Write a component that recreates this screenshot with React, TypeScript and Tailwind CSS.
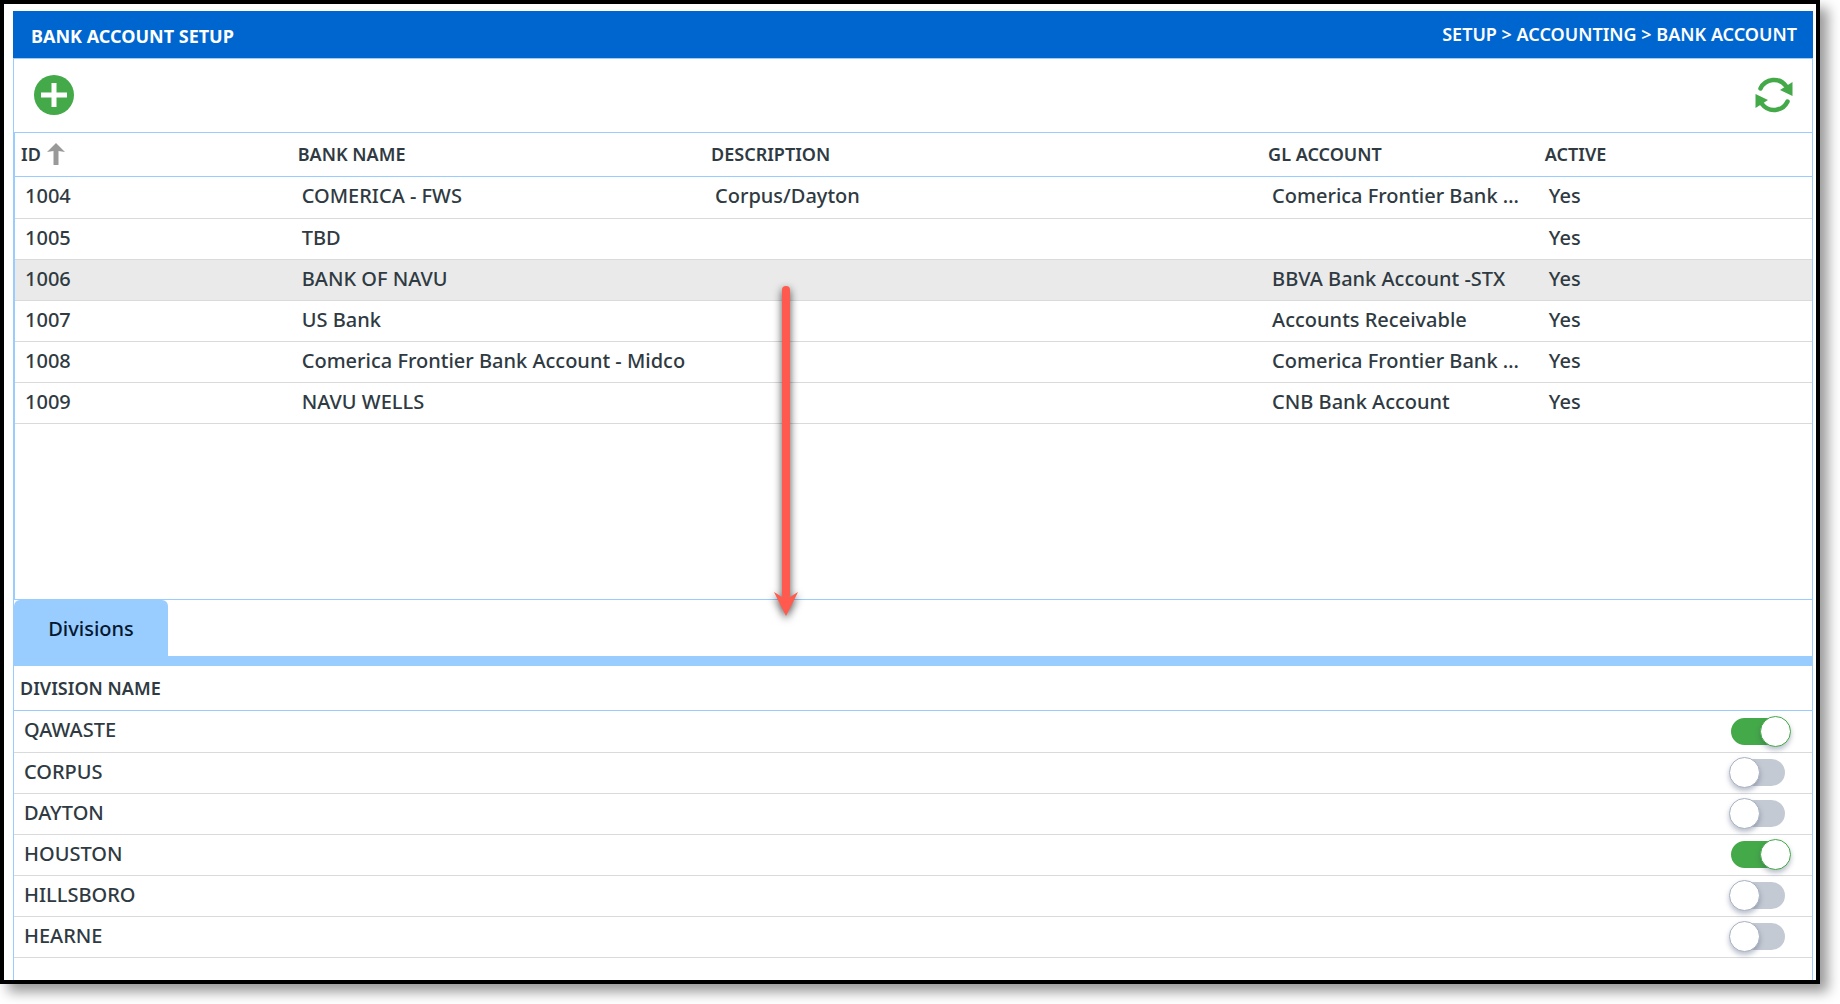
import { useState } from "react"

type Account = {
  id: string
  name: string
  description: string
  glAccount: string
  active: string
}

const accounts: Account[] = [
  { id: "1004", name: "COMERICA - FWS", description: "Corpus/Dayton", glAccount: "Comerica Frontier Bank …", active: "Yes" },
  { id: "1005", name: "TBD", description: "", glAccount: "", active: "Yes" },
  { id: "1006", name: "BANK OF NAVU", description: "", glAccount: "BBVA Bank Account -STX", active: "Yes" },
  { id: "1007", name: "US Bank", description: "", glAccount: "Accounts Receivable", active: "Yes" },
  { id: "1008", name: "Comerica Frontier Bank Account - Midco", description: "", glAccount: "Comerica Frontier Bank …", active: "Yes" },
  { id: "1009", name: "NAVU WELLS", description: "", glAccount: "CNB Bank Account", active: "Yes" },
]

const initialDivisions = [
  { name: "QAWASTE", enabled: true },
  { name: "CORPUS", enabled: false },
  { name: "DAYTON", enabled: false },
  { name: "HOUSTON", enabled: true },
  { name: "HILLSBORO", enabled: false },
  { name: "HEARNE", enabled: false },
]

function AddIcon() {
  return (
    <svg viewBox="0 0 40 40" className="size-10" aria-hidden="true">
      <circle cx="20" cy="20" r="20" fill="#44a948" />
      <path d="M20 8v24M7 20h26" stroke="#fff" strokeWidth="5" />
    </svg>
  )
}

function RefreshIcon() {
  return (
    <svg viewBox="0 0 38 36" className="h-9 w-[38px]" fill="none" aria-hidden="true">
      <path d="M5.500 11.500A15 15 0 0 1 31 9" stroke="#44a948" strokeWidth="4.500" strokeLinecap="round" />
      <path d="M32.500 24.500A15 15 0 0 1 7 27" stroke="#44a948" strokeWidth="4.500" strokeLinecap="round" />
      <path d="M37.500 5v14L25 13z" fill="#44a948" />
      <path d="M.5 31V17L13 23z" fill="#44a948" />
    </svg>
  )
}

function SortArrow() {
  return (
    <svg viewBox="0 0 18 22" className="h-[22px] w-[18px]" aria-hidden="true">
      <path d="M9 0l9 9-6.500-1v14h-5V8L0 9z" fill="#999" />
    </svg>
  )
}

function DragArrow() {
  return (
    <svg
      viewBox="0 0 40 350"
      className="pointer-events-none absolute top-[278px] left-[762px] h-[350px] w-10 drop-shadow-[0_3px_4px_rgba(0,0,0,0.7)]"
      aria-hidden="true"
    >
      <path d="M20 8v304" stroke="#ff5a4d" strokeWidth="8" strokeLinecap="round" />
      <path d="M8 310l8 5h8l8-5-12 24z" fill="#ff5a4d" />
    </svg>
  )
}

function AccountsTable() {
  return (
    <div className="min-h-[468px] border-y border-l border-[#99ccff]">
      <table className="w-full table-fixed border-collapse text-left">
        <thead className="text-lg leading-6">
          <tr className="h-[43px] border-b border-[#99ccff]">
            <th className="w-[15.4%] px-1.5 font-semibold">
              <span className="flex items-center gap-1.5">
                ID <SortArrow />
              </span>
            </th>
            <th className="w-[23%] px-1.5 font-semibold">BANK NAME</th>
            <th className="w-[31%] px-1.5 font-semibold">DESCRIPTION</th>
            <th className="w-[15.4%] px-1.5 font-semibold">GL ACCOUNT</th>
            <th className="px-1.5 font-semibold">ACTIVE</th>
          </tr>
        </thead>
        <tbody className="text-xl leading-6 font-medium">
          {accounts.map((account) => (
            <tr
              key={account.id}
              className={`h-[41px] border-b border-[#d8dadb] first:h-[42px] ${account.id === "1006" ? "bg-[#eaeaea]" : ""}`}
            >
              <td className="truncate px-2.5 pb-0.5">{account.id}</td>
              <td className="truncate px-2.5 pb-0.5">{account.name}</td>
              <td className="truncate px-2.5 pb-0.5">{account.description}</td>
              <td className="truncate px-2.5 pb-0.5">{account.glAccount}</td>
              <td className="truncate px-2.5 pb-0.5">{account.active}</td>
            </tr>
          ))}
        </tbody>
      </table>
    </div>
  )
}

function DivisionsTable() {
  const [divisions, setDivisions] = useState(initialDivisions)

  const toggle = (name: string) =>
    setDivisions((rows) => rows.map((row) => (row.name === name ? { ...row, enabled: !row.enabled } : row)))

  return (
    <table className="w-full border-collapse text-left">
      <thead className="text-lg leading-6">
        <tr className="h-11 border-b border-[#99ccff]">
          <th className="px-1.5 font-semibold" colSpan={2}>
            DIVISION NAME
          </th>
        </tr>
      </thead>
      <tbody className="text-xl leading-6 font-medium">
        {divisions.map((division) => (
          <tr key={division.name} className="h-[41px] border-b border-[#d8dadb] first:h-[42px]">
            <td className="px-2.5 pb-0.5">
              <label htmlFor={division.name}>{division.name}</label>
            </td>
            <td className="pr-[27px]">
              <input
                id={division.name}
                type="checkbox"
                role="switch"
                checked={division.enabled}
                onChange={() => toggle(division.name)}
                className="relative ml-auto block h-[27px] w-[54px] cursor-pointer appearance-none rounded-full bg-[#c4cad3] before:absolute before:-top-0.5 before:-left-0.5 before:size-[31px] before:rounded-full before:border before:border-[#a9b2c3] before:bg-white before:shadow-[0_3px_5px_rgba(60,75,110,0.35)] checked:bg-[#44a948] checked:before:left-[29px] checked:before:border-[#44a948]"
              />
            </td>
          </tr>
        ))}
      </tbody>
    </table>
  )
}

export default function App() {
  return (
    <div className="flex min-h-screen flex-col bg-white pr-5 pb-5 font-['Noto_Sans','Open_Sans',sans-serif] text-[#2f3a42]">
      <main className="relative flex flex-1 flex-col border-4 border-black bg-white pt-[7px] pr-[3px] pl-[9px] shadow-[8px_8px_12px_rgba(0,0,0,0.4)]">
        <header className="flex h-[47px] items-center justify-between bg-[#0066cf] pr-4 pl-[18px] text-lg leading-6 text-white">
          <h1 className="pt-0.5 font-bold">BANK ACCOUNT SETUP</h1>
          <nav className="pb-0.5 font-semibold">SETUP &gt; ACCOUNTING &gt; BANK ACCOUNT</nav>
        </header>
        <section className="flex-1 border-x border-t border-[#99ccff]">
          <div className="flex h-[73px] items-center justify-between pr-[19px] pb-0.5 pl-5">
            <button type="button" aria-label="Add bank account" className="cursor-pointer">
              <AddIcon />
            </button>
            <button type="button" aria-label="Refresh" className="cursor-pointer">
              <RefreshIcon />
            </button>
          </div>
          <AccountsTable />
          <div role="tablist" className="flex border-b-10 border-[#99ccff]">
            <button
              type="button"
              role="tab"
              aria-selected="true"
              className="h-14 w-[154px] rounded-t-md bg-[#99ccff] pt-0.5 text-xl leading-6 font-medium text-[#04182f]"
            >
              Divisions
            </button>
          </div>
          <DivisionsTable />
        </section>
        <DragArrow />
      </main>
    </div>
  )
}
